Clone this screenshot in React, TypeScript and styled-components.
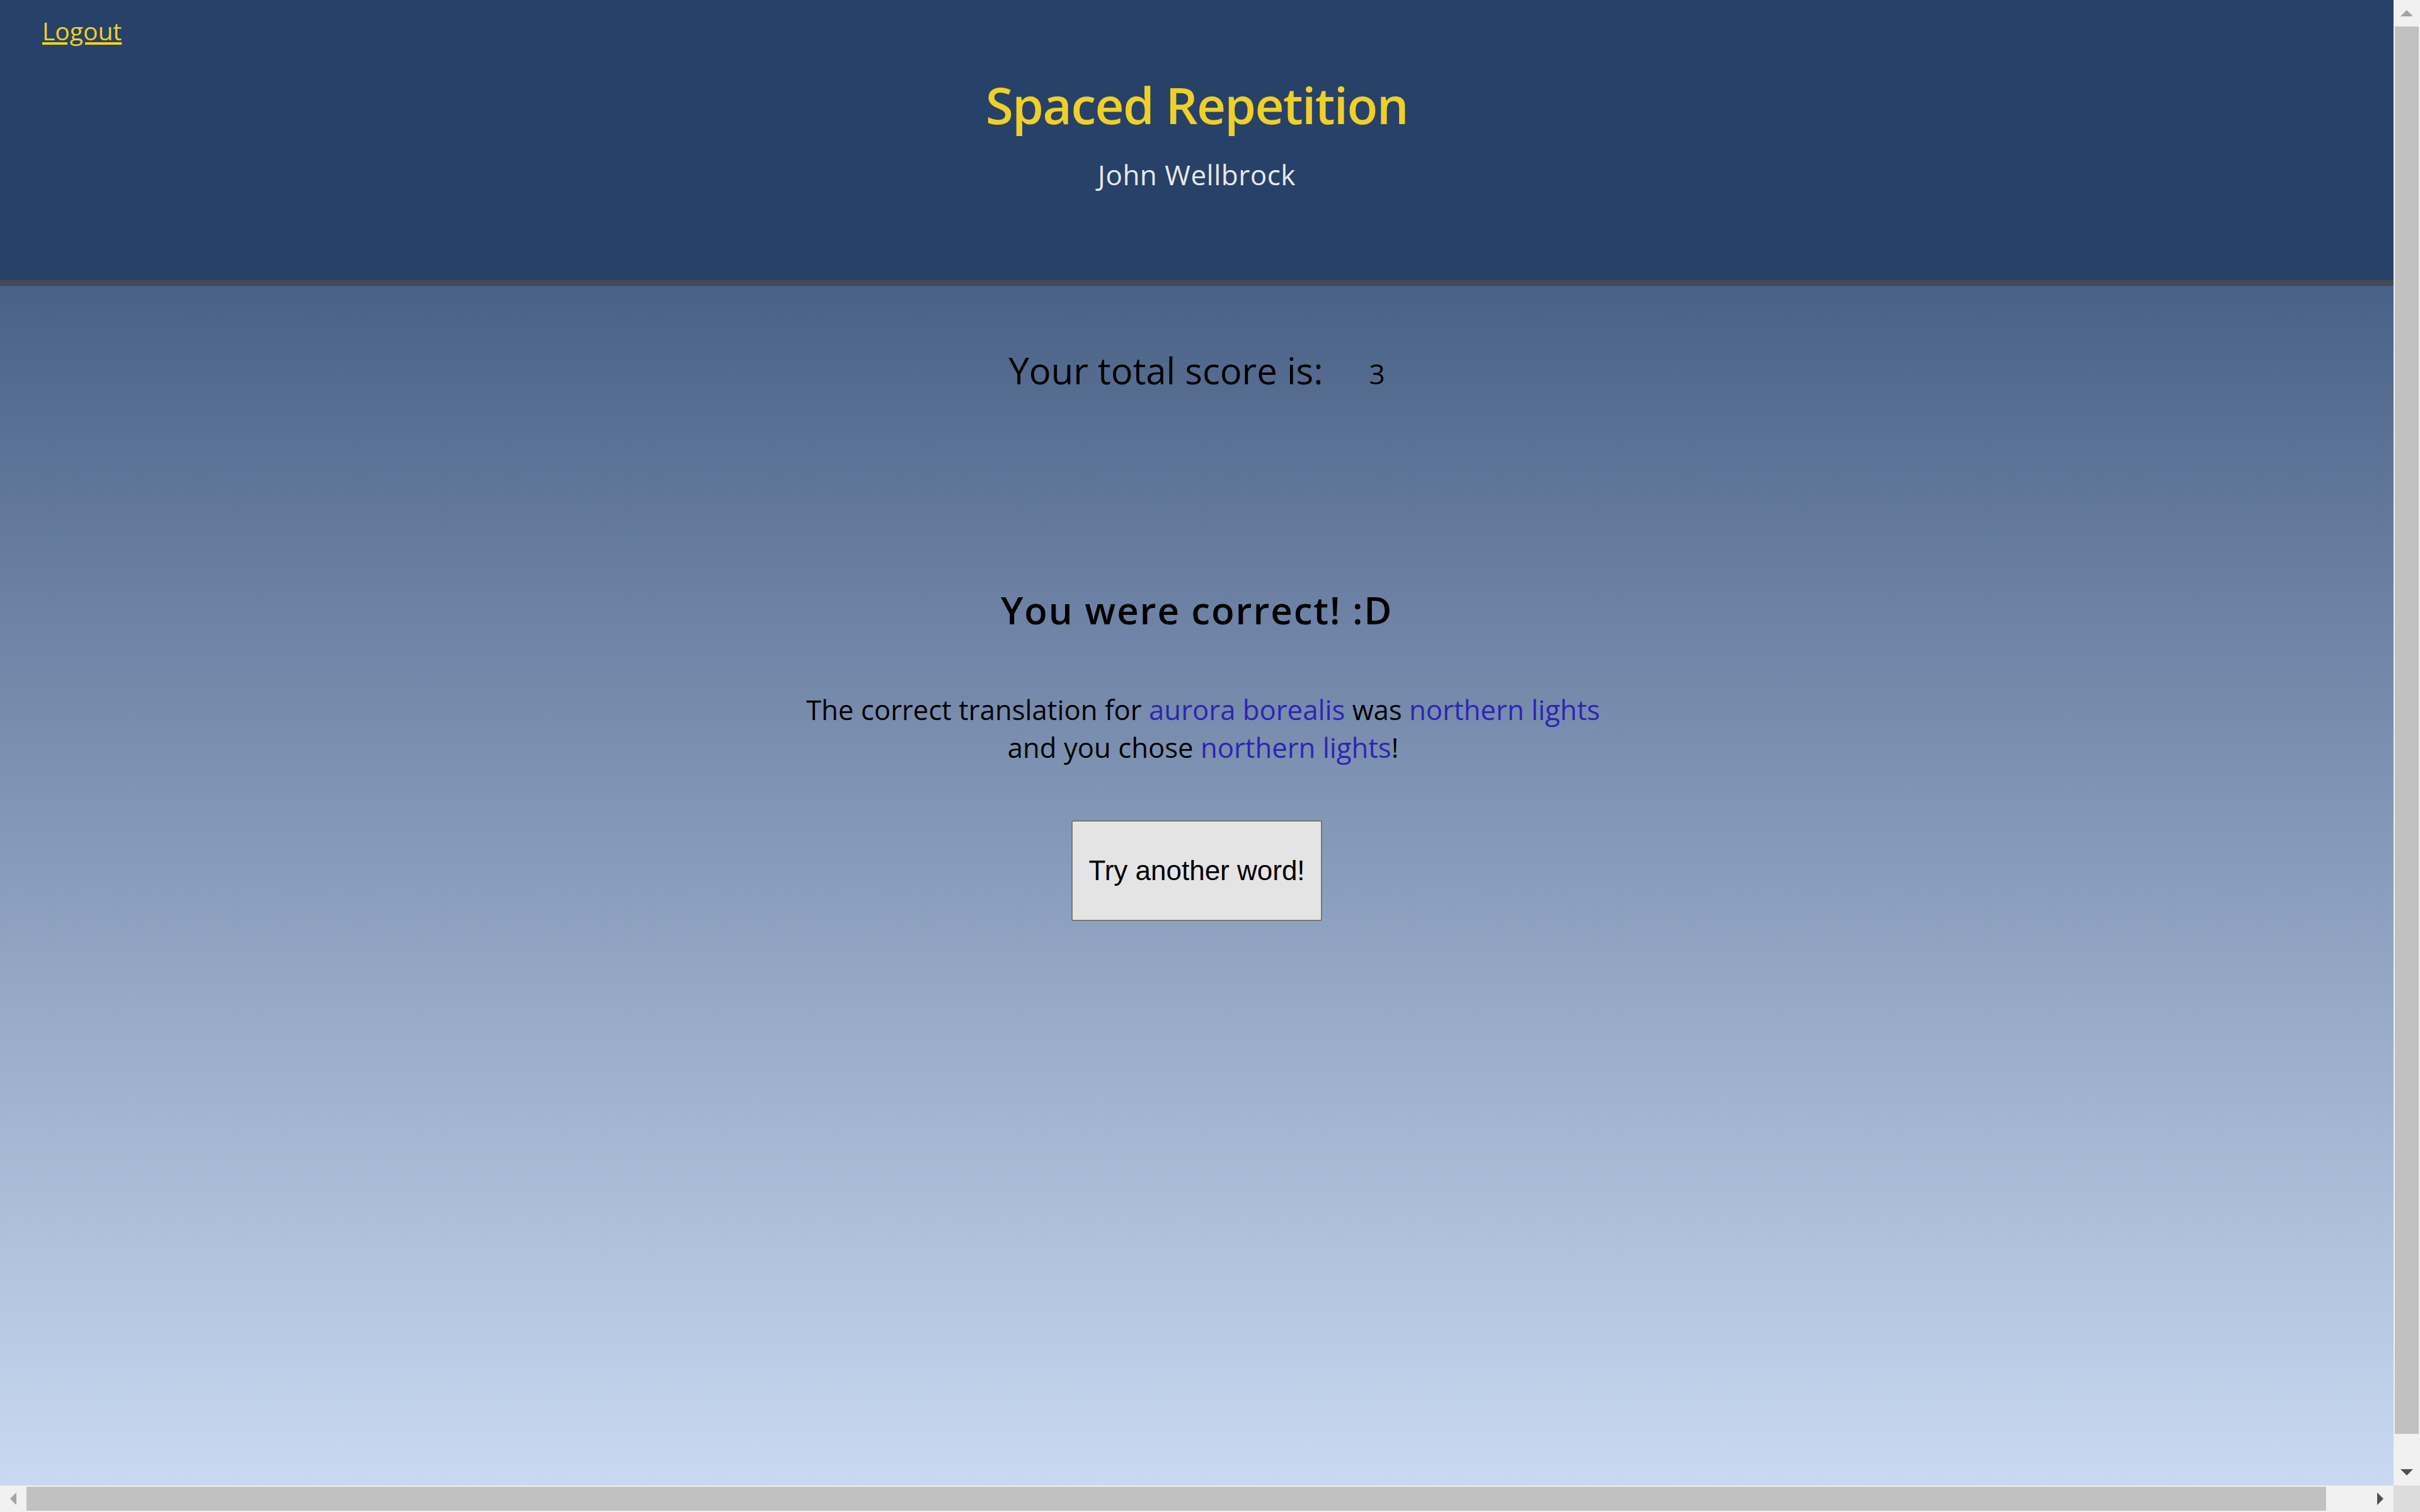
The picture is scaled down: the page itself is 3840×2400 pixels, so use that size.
import React from "react";
import styled, { createGlobalStyle } from "styled-components";

const GlobalStyle = createGlobalStyle`
  html, body {
    margin: 0;
    padding: 0;
    overflow: hidden;
  }
  body {
    font-family: "Open Sans", "Lato", sans-serif;
    background: #f1f1f1;
  }
`;

/* Window frame: the page viewport plus the browser scrollbars */
const Frame = styled.div`
  display: grid;
  grid-template-columns: 1fr 42px;
  grid-template-rows: 1fr 42px;
  width: 100vw;
  height: 100vh;
`;

const Viewport = styled.div`
  overflow: hidden;
  min-width: 0;
  min-height: 0;
  display: flex;
  flex-direction: column;
`;

const VScrollbar = styled.div`
  display: flex;
  flex-direction: column;
  background: #f1f1f1;
`;

const HScrollbar = styled.div`
  display: flex;
  flex-direction: row;
  background: #f1f1f1;
`;

const Corner = styled.div`
  background: #dcdcdc;
`;

const ArrowButton = styled.div`
  flex: 0 0 42px;
  width: 42px;
  height: 42px;
  display: flex;
  align-items: center;
  justify-content: center;
`;

const Track = styled.div<{ $vertical?: boolean }>`
  flex: 1;
  display: flex;
  flex-direction: ${(p) => (p.$vertical ? "column" : "row")};
  padding: ${(p) => (p.$vertical ? "0 2px" : "2px 0")};
`;

const Thumb = styled.div<{ $fill: number }>`
  flex: 0 0 ${(p) => p.$fill}%;
  background: #c1c1c1;
`;

const Header = styled.header`
  flex: 0 0 auto;
  height: 444px;
  background: #284169;
  border-bottom: 10px solid #434a5c;
  display: flex;
  flex-direction: column;
  align-items: center;
`;

const Nav = styled.nav`
  align-self: stretch;
  padding: 23px 0 0 67px;
`;

const LogoutLink = styled.a`
  font-size: 39px;
  line-height: 52px;
  color: #efd027;
  text-decoration: underline;
  text-decoration-thickness: 4px;
  text-underline-offset: 3px;
  cursor: pointer;
`;

const Title = styled.h1`
  margin: 41px 0 0;
  font-size: 80px;
  line-height: 100px;
  font-weight: 600;
  letter-spacing: -1.6px;
  color: #efd027;
`;

const UserName = styled.p`
  margin: 35px 0 0;
  font-size: 44px;
  line-height: 52px;
  letter-spacing: 0.5px;
  color: #e8e8e8;
`;

const Main = styled.main`
  flex: 0 0 auto;
  min-height: calc(100vh - 454px);
  background: linear-gradient(to bottom, #4a6187, #ccdcf4);
  display: flex;
  flex-direction: column;
  align-items: center;
  padding-top: 99px;
  box-sizing: border-box;
`;

const ScoreRow = styled.section`
  display: flex;
  align-items: baseline;
  gap: 73px;
  color: #000;
`;

const ScoreLabel = styled.span`
  font-size: 58px;
  line-height: 70px;
`;

const ScoreValue = styled.span`
  font-size: 44px;
  line-height: 52px;
`;

const ResultHeading = styled.h2`
  margin: 309px 0 0;
  font-size: 60px;
  line-height: 72px;
  font-weight: 600;
  letter-spacing: 1.9px;
  color: #000;
`;

const Feedback = styled.p`
  margin: 92px 0 0;
  padding-left: 20px;
  font-size: 43.7px;
  line-height: 60px;
  text-align: center;
  color: #000;
`;

const Word = styled.span`
  color: #2c25b4;
`;

const NextButton = styled.button`
  margin-top: 86px;
  font-family: "Liberation Sans", Arial, sans-serif;
  font-size: 44px;
  line-height: 52px;
  padding: 52px 25px;
  border: 2px solid #767676;
  border-radius: 3px;
  background: #e4e4e4;
  color: #000;
  cursor: pointer;
`;

const ArrowUp = () => (
  <svg width="20" height="10" viewBox="0 0 20 10">
    <polygon points="10,0 20,10 0,10" fill="#a3a3a3" />
  </svg>
);
const ArrowDown = () => (
  <svg width="20" height="10" viewBox="0 0 20 10">
    <polygon points="0,0 20,0 10,10" fill="#505050" />
  </svg>
);
const ArrowLeft = () => (
  <svg width="10" height="20" viewBox="0 0 10 20">
    <polygon points="10,0 10,20 0,10" fill="#a3a3a3" />
  </svg>
);
const ArrowRight = () => (
  <svg width="10" height="20" viewBox="0 0 10 20">
    <polygon points="0,0 10,10 0,20" fill="#505050" />
  </svg>
);

export default function App() {
  return (
    <Frame>
      <GlobalStyle />
      <Viewport>
        <Header>
          <Nav>
            <LogoutLink href="#">Logout</LogoutLink>
          </Nav>
          <Title>Spaced Repetition</Title>
          <UserName>John Wellbrock</UserName>
        </Header>
        <Main>
          <ScoreRow>
            <ScoreLabel>Your total score is:</ScoreLabel>
            <ScoreValue>3</ScoreValue>
          </ScoreRow>
          <ResultHeading>You were correct! :D</ResultHeading>
          <Feedback>
            The correct translation for <Word>aurora borealis</Word> was{" "}
            <Word>northern lights</Word>
            <br />
            and you chose <Word>northern lights</Word>!
          </Feedback>
          <NextButton type="button">Try another word!</NextButton>
        </Main>
      </Viewport>
      <VScrollbar>
        <ArrowButton>
          <ArrowUp />
        </ArrowButton>
        <Track $vertical>
          <Thumb $fill={98.24} />
        </Track>
        <ArrowButton>
          <ArrowDown />
        </ArrowButton>
      </VScrollbar>
      <HScrollbar>
        <ArrowButton>
          <ArrowLeft />
        </ArrowButton>
        <Track>
          <Thumb $fill={98.25} />
        </Track>
        <ArrowButton>
          <ArrowRight />
        </ArrowButton>
      </HScrollbar>
      <Corner />
    </Frame>
  );
}
